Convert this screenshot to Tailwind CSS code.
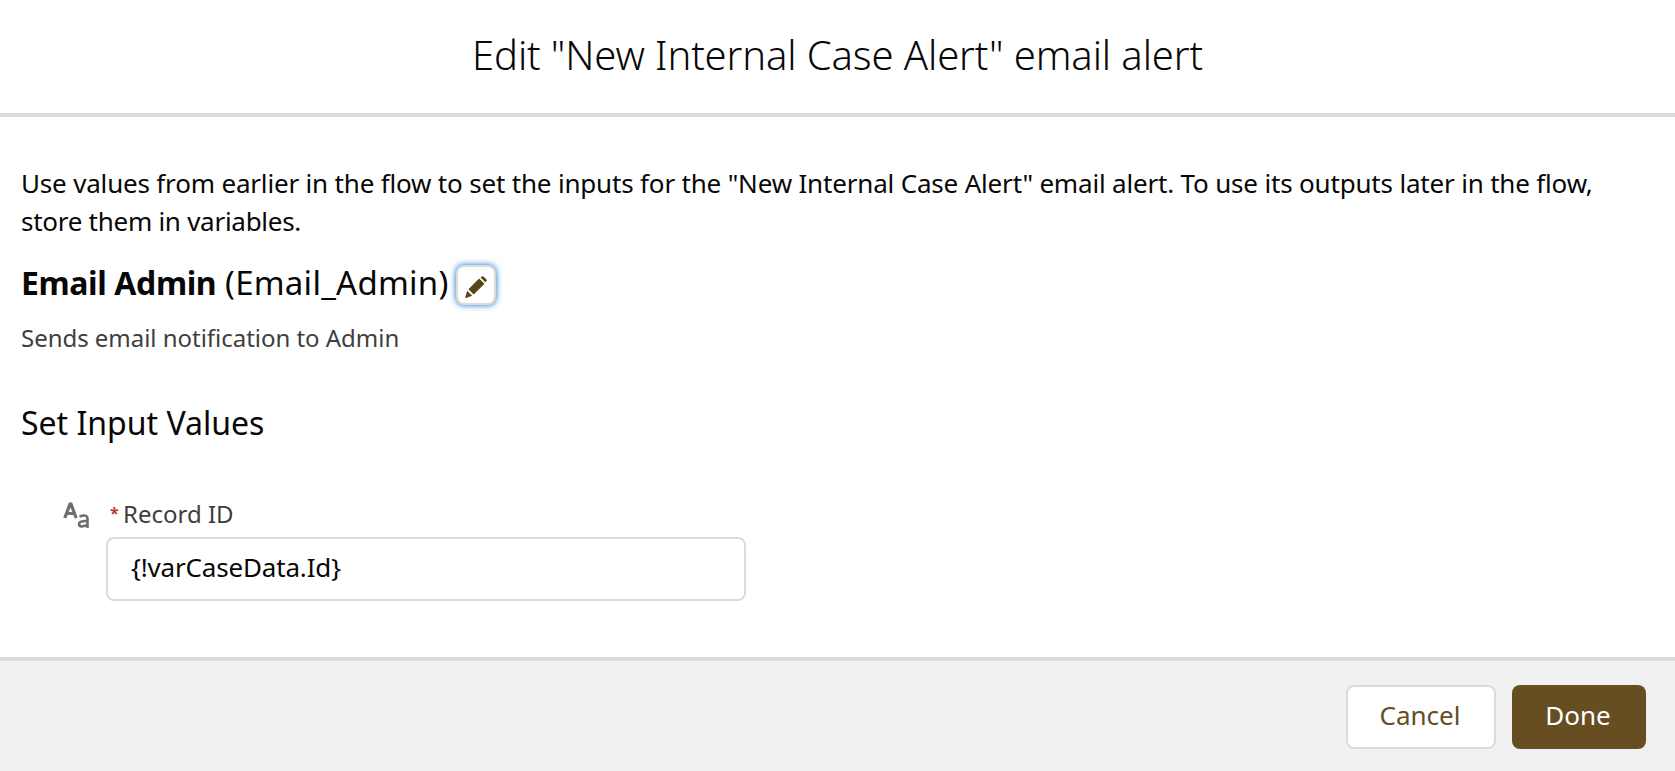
<!DOCTYPE html>
<html lang="en">
<head>
<meta charset="utf-8">
<title>Edit email alert</title>
<script src="https://cdn.jsdelivr.net/npm/@tailwindcss/browser@4"></script>
</head>
<body class="h-screen overflow-hidden bg-white font-['Noto_Sans',sans-serif] text-[#080707]">
<div class="flex h-[771px] w-full flex-col">
  <header class="flex h-[117px] shrink-0 justify-center border-b-4 border-[#dddbda] pt-[25px]">
    <h1 class="text-[40px] leading-[60px] font-light tracking-[-0.12px] whitespace-nowrap">Edit "New Internal Case Alert" email alert</h1>
  </header>
  <main class="flex-1 px-[21px] pt-[47px]">
    <p class="text-[26px] leading-[38px] tracking-[-0.18px] whitespace-nowrap">Use values from earlier in the flow to set the inputs for the "New Internal Case Alert" email alert. To use its outputs later in the flow,<br><span class="tracking-[-0.27px]">store them in variables.</span></p>
    <div class="mt-[19px] flex items-center text-[32px] leading-[48px] whitespace-nowrap">
      <span class="w-[204px] font-bold tracking-[-0.4px]">Email Admin</span>
      <span class="w-[231px] text-[33px] tracking-[0.25px]">(Email_Admin)</span>
      <button class="mt-1 flex size-10 items-center justify-center rounded-lg border-2 border-[#dddbda] bg-white pt-[3px] shadow-[0_0_6px_#0070d2]" aria-label="Edit">
        <svg class="size-[22px] text-[#5b431a]" viewBox="0 0 22 22" fill="currentColor">
          <path d="M2.200 14.700 7.200 19.700 1 21.900Q0 22.200.200 21.200z"/>
          <path d="M3.400 13.200 13.700 2.900Q14.200 2.400 14.700 2.900L19 7.200Q19.500 7.700 19 8.200L8.700 18.500z"/>
          <path d="M15.600 1.600 16.600.600Q17.600-.200 18.700.700L21.200 3.200Q22.200 4.400 21.300 5.300L20.300 6.300z"/>
        </svg>
      </button>
    </div>
    <p class="mt-[13px] text-[24px] leading-[36px] tracking-[-0.03px] text-[#3e3e3c]">Sends email notification to Admin</p>
    <h2 class="mt-[43px] text-[32px] leading-[48px]">Set Input Values</h2>
    <div class="mt-[49px] flex pl-[42px]">
      <svg class="mt-[6px] h-[26px] w-[26px] shrink-0" viewBox="0 0 26 26" fill="none" stroke="#706e6b">
        <path d="M1.800 16 7 2H8L13.200 16M4 11.500H11" stroke-width="3.200"/>
        <path d="M16.500 14.500Q24.500 11.500 24.500 17V26M24.500 19Q16 18.500 16 22.500 16.500 26 24.500 23" stroke-width="2.600"/>
      </svg>
      <div class="ml-[17px] w-[640px]">
        <label for="record" class="flex pl-1 text-[24px] leading-[36px] text-[#3e3e3c]"><abbr class="w-[13px] text-[16px] leading-[34px] font-bold text-[#c23934] no-underline">*</abbr>Record ID</label>
        <input id="record" value="{!varCaseData.Id}" class="mt-[5px] block h-16 w-full rounded-lg border-2 border-[#dddbda] bg-white px-[23px] pb-1 text-[26px] tracking-[-0.17px]">
      </div>
    </div>
  </main>
  <footer class="flex h-[114px] shrink-0 justify-end gap-4 border-t-4 border-[#dddbda] bg-[#f1f1f1] pt-6 pr-[29px] text-[26px]">
    <button class="h-16 w-[150px] rounded-lg border-2 border-[#dddbda] bg-white pr-2 pb-1 pl-1.5 text-[#664e22]">Cancel</button>
    <button class="h-16 w-[134px] rounded-lg bg-[#664e22] pr-2 pb-1 pl-1.5 text-white">Done</button>
  </footer>
</div>
</body>
</html>
